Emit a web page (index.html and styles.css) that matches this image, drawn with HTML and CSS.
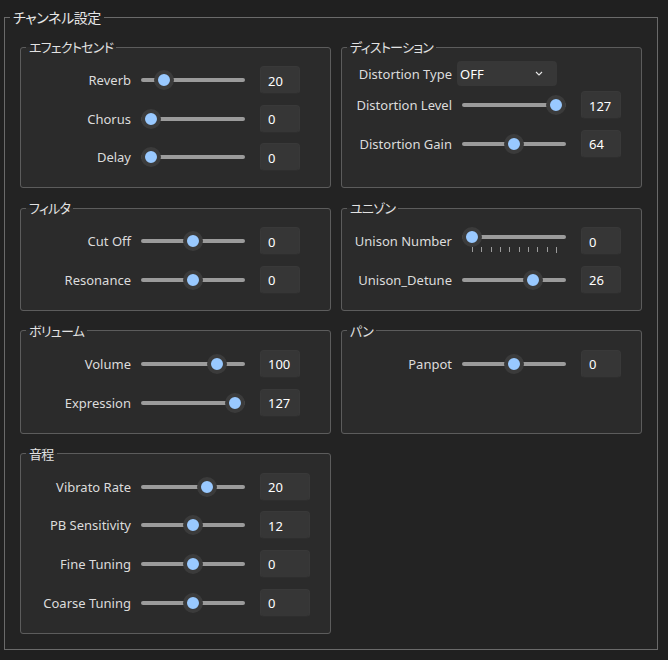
FILE: index.html
```html
<!DOCTYPE html>
<html lang="ja">
<head>
    <meta charset="UTF-8">
    <meta name="viewport" content="width=device-width, initial-scale=1.0">
    <title>チャンネル設定</title>
    <link rel="stylesheet" href="styles.css">
</head>
<body>
    <fieldset class="channel">
        <legend>チャンネル設定</legend>

        <div class="groups">
            <fieldset class="group">
                <legend>エフェクトセンド</legend>
                <div class="rows">
                    <div class="row"><label>Reverb</label><input type="range" min="0" max="127" value="20"><input class="num" value="20"></div>
                    <div class="row"><label>Chorus</label><input type="range" min="0" max="127" value="0"><input class="num" value="0"></div>
                    <div class="row"><label>Delay</label><input type="range" min="0" max="127" value="0"><input class="num" value="0"></div>
                </div>
            </fieldset>

            <fieldset class="group dist">
                <legend>ディストーション</legend>
                <div class="rows">
                    <div class="row combo-row">
                        <label>Distortion Type</label>
                        <div class="combo">
                            <span>OFF</span>
                            <svg width="8" height="5" viewBox="0 0 8 5"><polyline points="1,1 4,4 7,1" fill="none" stroke="#e8e8e8" stroke-width="1.1"/></svg>
                        </div>
                    </div>
                    <div class="row"><label>Distortion Level</label><input type="range" min="0" max="127" value="127"><input class="num" value="127"></div>
                    <div class="row"><label>Distortion Gain</label><input type="range" min="0" max="127" value="64"><input class="num" value="64"></div>
                </div>
            </fieldset>

            <fieldset class="group">
                <legend>フィルタ</legend>
                <div class="rows">
                    <div class="row"><label>Cut Off</label><input type="range" min="-64" max="63" value="0"><input class="num" value="0"></div>
                    <div class="row"><label>Resonance</label><input type="range" min="-64" max="63" value="0"><input class="num" value="0"></div>
                </div>
            </fieldset>

            <fieldset class="group">
                <legend>ユニゾン</legend>
                <div class="rows">
                    <div class="row">
                        <label>Unison Number</label>
                        <div class="ticked">
                            <input type="range" min="0" max="9" value="0">
                            <div class="ticks"><i></i><i></i><i></i><i></i><i></i><i></i><i></i><i></i><i></i><i></i></div>
                        </div>
                        <input class="num" value="0">
                    </div>
                    <div class="row"><label>Unison_Detune</label><input type="range" min="0" max="36" value="26"><input class="num" value="26"></div>
                </div>
            </fieldset>

            <fieldset class="group">
                <legend>ボリューム</legend>
                <div class="rows">
                    <div class="row"><label>Volume</label><input type="range" min="0" max="127" value="100"><input class="num" value="100"></div>
                    <div class="row"><label>Expression</label><input type="range" min="0" max="127" value="127"><input class="num" value="127"></div>
                </div>
            </fieldset>

            <fieldset class="group">
                <legend>パン</legend>
                <div class="rows">
                    <div class="row"><label>Panpot</label><input type="range" min="-64" max="63" value="0"><input class="num" value="0"></div>
                </div>
            </fieldset>

            <fieldset class="group pitch">
                <legend>音程</legend>
                <div class="rows">
                    <div class="row"><label>Vibrato Rate</label><input type="range" min="0" max="30" value="20"><input class="num" value="20"></div>
                    <div class="row"><label>PB Sensitivity</label><input type="range" min="0" max="24" value="12"><input class="num" value="12"></div>
                    <div class="row"><label>Fine Tuning</label><input type="range" min="-64" max="63" value="0"><input class="num" value="0"></div>
                    <div class="row"><label>Coarse Tuning</label><input type="range" min="-64" max="63" value="0"><input class="num" value="0"></div>
                </div>
            </fieldset>
        </div>
    </fieldset>
</body>
</html>
```

FILE: styles.css
```css
body {
    margin: 0;
    background: #202020;
    font-family: "Noto Sans", "Noto Sans CJK JP", sans-serif;
    color: #dedede;
}
.channel {
    margin: 8px 10px 0 4px;
    padding: 13px 15px 15px 15px;
    border: 1px solid #6a6a6a;
    background: #232323;
    min-width: 0;
}
.channel > legend {
    margin-left: -10px;
    padding: 0 3px;
    font-family: "Noto Sans CJK JP", sans-serif;
    font-feature-settings: "palt";
    font-size: 14px;
    line-height: 18px;
    letter-spacing: -0.4px;
    color: #e6e6e6;
}
.groups {
    display: grid;
    grid-template-columns: 311px 301px;
    column-gap: 10px;
    row-gap: 12px;
    align-items: stretch;
}
.group {
    margin: 0;
    padding: 11px 0 16px 0;
    border: 1px solid #5c5c5c;
    border-radius: 3px;
    background: #2b2b2b;
    min-width: 0;
}
.group > legend {
    margin-left: 5px;
    padding: 0 3px;
    font-family: "Noto Sans CJK JP", sans-serif;
    font-feature-settings: "palt";
    font-size: 13px;
    line-height: 16px;
    letter-spacing: -0.7px;
    color: #e2e2e2;
}
.group.dist {
    padding-top: 6px;
}
.rows {
    display: flex;
    flex-direction: column;
    gap: 10.67px;
}
.row {
    display: flex;
    align-items: center;
    height: 28px;
}
.row label {
    width: 110px;
    flex: none;
    text-align: right;
    font-size: 13px;
    line-height: 16px;
    color: #dcdcdc;
}
.combo-row {
    height: 25px;
    margin-bottom: -5.5px;
}
.combo {
    margin-left: 5px;
    width: 100px;
    height: 25px;
    box-sizing: border-box;
    padding: 0 14px 0 3px;
    display: flex;
    align-items: center;
    justify-content: space-between;
    background: #373737;
    border-radius: 4px;
    font-size: 13px;
    color: #ffffff;
}
input[type=range] {
    -webkit-appearance: none;
    appearance: none;
    margin: 0 0 0 10px;
    width: 104px;
    height: 20px;
    background: transparent;
    flex: none;
}
input[type=range]::-webkit-slider-runnable-track {
    height: 4px;
    background: #9b9b9b;
    border-radius: 2px;
}
input[type=range]::-webkit-slider-thumb {
    -webkit-appearance: none;
    width: 20px;
    height: 20px;
    margin-top: -8px;
    box-sizing: border-box;
    border-radius: 50%;
    border: 4px solid #3b3b3b;
    background: #99c9ff;
}
.ticked {
    display: flex;
    flex-direction: column;
    margin-top: -3px;
}
.ticks {
    display: flex;
    justify-content: space-between;
    align-items: flex-start;
    margin-left: 20px;
    width: 85px;
    height: 6px;
}
.ticks i {
    width: 1px;
    height: 5px;
    background: #9b9b9b;
}
.ticks i:last-child {
    height: 6px;
}
.num {
    margin-left: 15px;
    width: 40px;
    height: 28px;
    box-sizing: border-box;
    padding: 1px 0 0 7px;
    flex: none;
    background: #363636;
    border: 1px solid #393939;
    border-bottom-color: #2e2e2e;
    border-radius: 4px;
    color: #ffffff;
    font-family: "Noto Sans", sans-serif;
    font-size: 13px;
    outline: none;
}
.pitch .num {
    width: 50px;
}
```
